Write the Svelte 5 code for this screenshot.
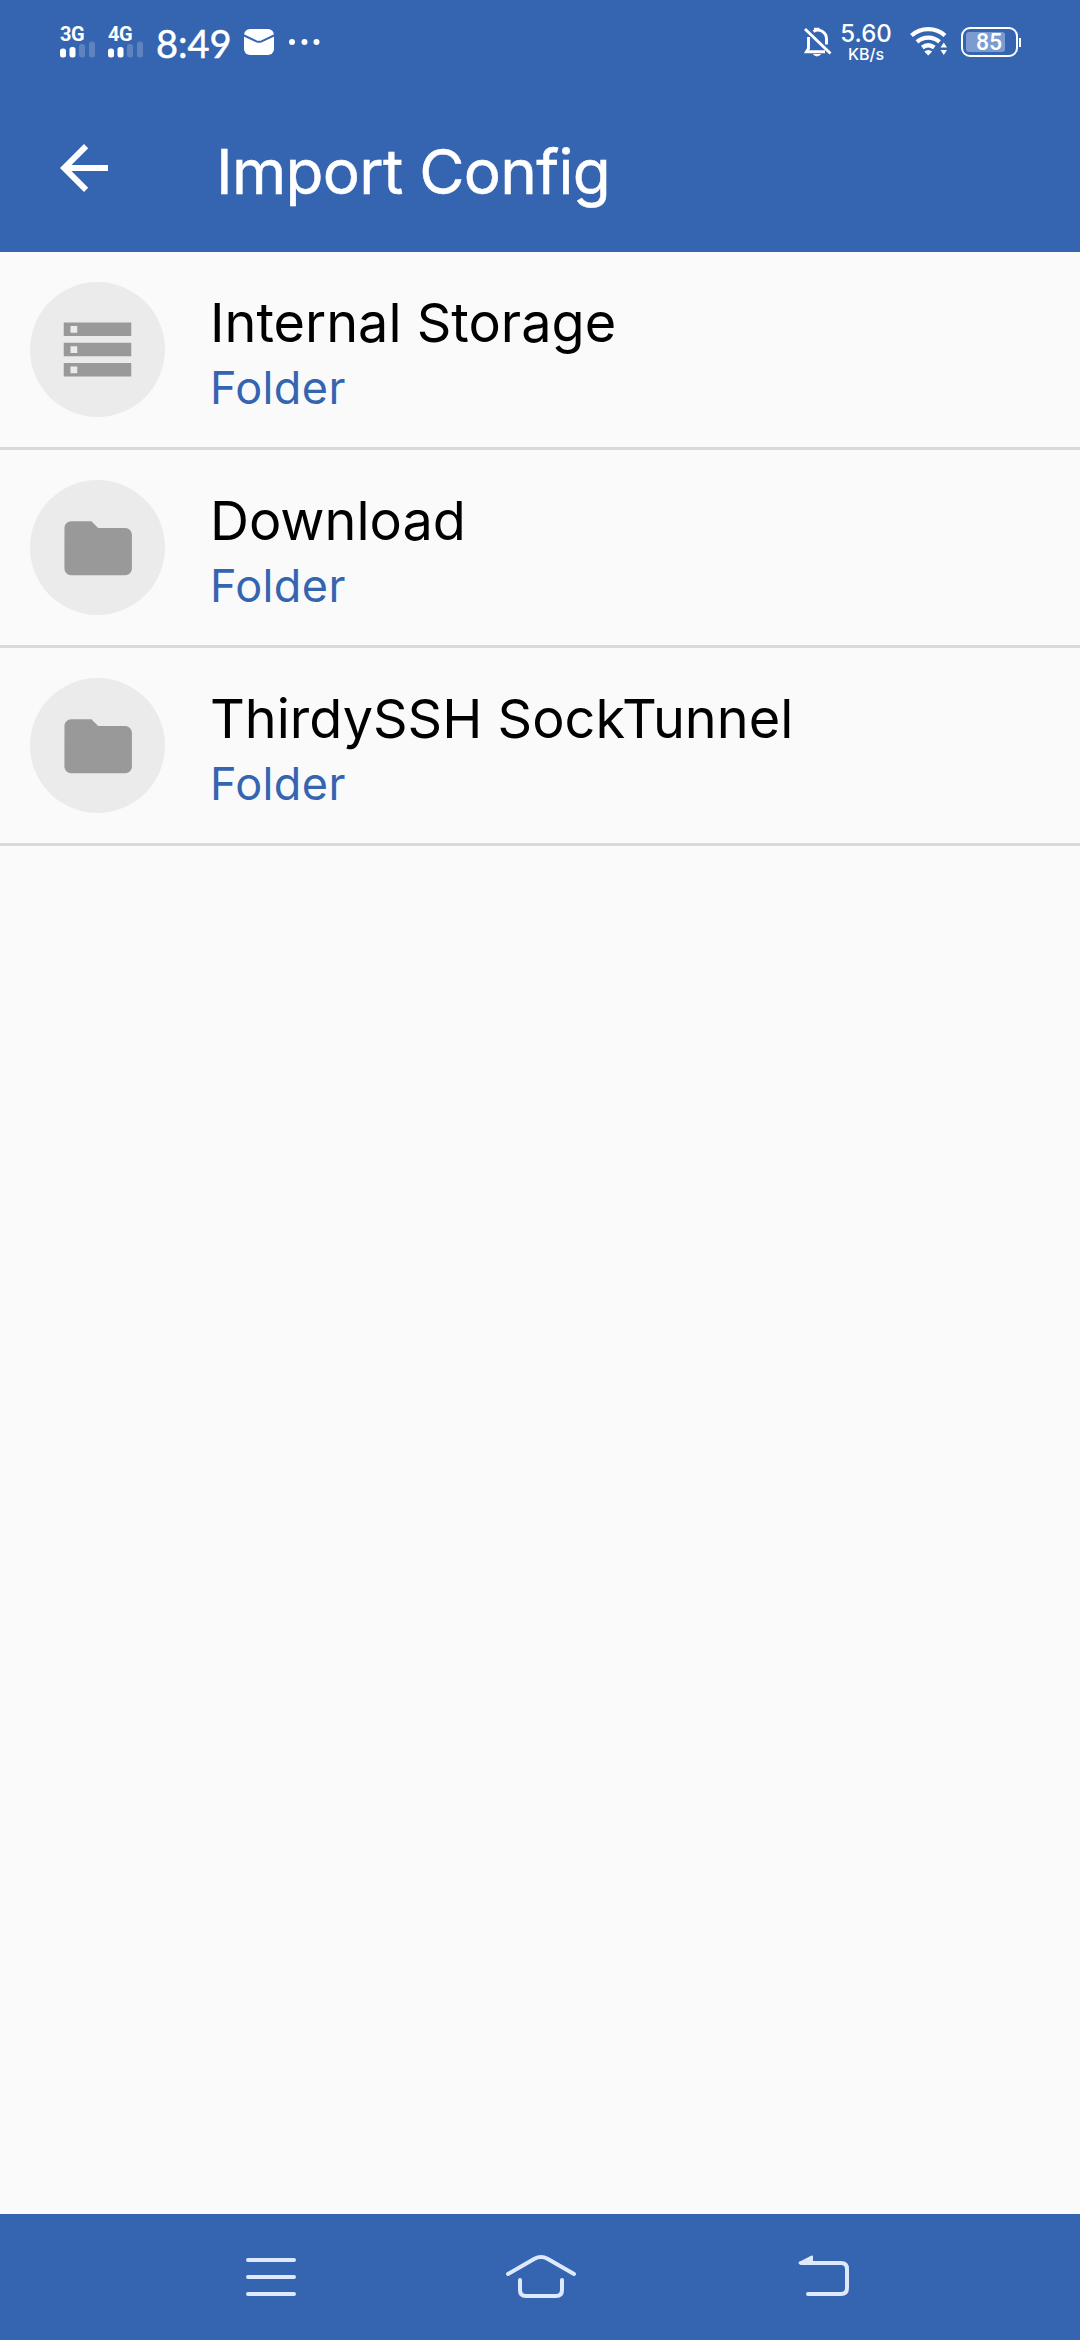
<script lang="ts">
  const networks = ['3G', '4G'];
  const entries = [
    { name: 'Internal Storage', icon: 'storage' },
    { name: 'Download', icon: 'folder' },
    { name: 'ThirdySSH SockTunnel', icon: 'folder' },
  ];
  const icons: Record<string, string> = {
    storage: 'M2 20h20v-4H2v4zm2-3h2v2H4v-2zM2 4v4h20V4H2zm4 3H4V5h2v2zm-4 7h20v-4H2v4zm2-3h2v2H4v-2z',
    folder: 'M10.200 4.200H4.200c-1.100 0-1.990.9-1.990 2L2.200 18.200c0 1.100.9 2 2 2h16c1.100 0 2-.9 2-2V8.200c0-1.100-.9-2-2-2h-8l-2-2z',
  };
</script>

<div class="screen">
  <div class="status">
    <div class="left">
      {#each networks as network}
        <div class="signal">
          <span class="gen">{network}</span>
          <svg width="36" height="17" viewBox="0 0 36 17" fill="#fff">
            <rect x="0" y="7.5" width="6" height="9" rx="2.5" />
            <rect x="9.5" y="6" width="6" height="10.5" rx="2.5" />
            <rect class="dim" x="19" y="3" width="6" height="13.5" rx="2.5" />
            <rect class="dim" x="29" y="0.5" width="6" height="16" rx="2.5" />
          </svg>
        </div>
      {/each}
      <span class="time">8:49</span>
      <svg class="mail" width="30" height="26" viewBox="0 0 30 26">
        <rect width="30" height="26" rx="6" fill="#fff" />
        <path d="M-1 6L12.500 12.300Q15 13.400 17.500 12.300L31 6" fill="none" stroke="#3565b1" stroke-width="2" />
      </svg>
      <svg class="dots" width="31" height="6" viewBox="0 0 31 6" fill="#fff">
        <circle cx="3" cy="3" r="3" /><circle cx="15.500" cy="3" r="3" /><circle cx="27.500" cy="3" r="3" />
      </svg>
    </div>

    <div class="right">
      <svg width="28" height="30" viewBox="0 0 28 30" fill="none" stroke="#fff" stroke-width="2.900">
        <path d="M1 2L26.500 26.500" />
        <path d="M4.500 10V21.500L2.500 24.700H21" />
        <path d="M9.500 4.500C15 1 22.500 5 22.500 12V17.500" />
        <path d="M10 2.200h5.500" />
        <path d="M9.500 27.500h7L13 29z" fill="#fff" stroke-width="1" />
      </svg>
      <div class="speed">
        <span class="rate">5.60</span>
        <span class="unit">KB/s</span>
      </div>
      <svg class="wifi" width="38" height="30" viewBox="0 0 38 30" fill="none" stroke="#fff" stroke-width="4.300">
        <path d="M1.500 8.500C11 0 25.500 0 35 8.500" />
        <path d="M7 14.800C13.500 9.200 23 9.200 29.500 14.800" />
        <path d="M12.300 20.500C16 17.600 20.500 17.600 24.300 20.500" />
        <path d="M14.300 24.500Q18.200 21.500 22.200 24.500L18.200 28.500z" fill="#fff" stroke="none" />
        <path d="M30.500 20.500L33.800 15.500L37 20.500zM30.500 23L33.800 28L37 23z" fill="#fff" stroke="none" />
      </svg>
      <div class="battery">
        <div class="level"><span>85</span></div>
        <i></i>
      </div>
    </div>
  </div>

  <header>
    <svg width="72" height="72" viewBox="0 0 24 24" fill="#fff">
      <path d="M20 11H7.830l5.590-5.590L12 4l-8 8 8 8 1.410-1.410L7.830 13H20v-2z" />
    </svg>
    <h1>Import Config</h1>
  </header>

  <main>
    {#each entries as entry}
      <div class="row">
        <div class="avatar">
          <svg width="81" height="81" viewBox="0 0 24 24" fill="#999"><path d={icons[entry.icon]} /></svg>
        </div>
        <div class="texts">
          <span class="name">{entry.name}</span>
          <span class="kind">Folder</span>
        </div>
      </div>
    {/each}
  </main>

  <nav>
    <svg width="50" height="44" viewBox="0 0 50 44">
      <path d="M2 5H48M2 22H48M2 39H48" />
    </svg>
    <svg class="home" width="70" height="44" viewBox="0 0 70 44">
      <path d="M2 19L28.500 3.800Q35 .300 41.500 3.800L68 19" />
      <path d="M14 25V35Q14 41 20 41H50Q56 41 56 35V25" />
    </svg>
    <svg class="back" width="51" height="44" viewBox="0 0 51 44">
      <path d="M3 8H43Q49 8 49 14V33Q49 39 43 39H10" />
      <path class="tip" d="M1.500 8L14 1.500V8z" />
    </svg>
  </nav>
</div>

<style>
  :global(body) { background: #fafafa; }
  .screen {
    width: 1080px;
    height: 2340px;
    display: flex;
    flex-direction: column;
    background: #fafafa;
    font-family: Inter, Roboto, sans-serif;
    overflow: hidden;
    white-space: nowrap;
  }
  svg { display: block; flex: none; overflow: visible; }
  .status {
    height: 84px;
    box-sizing: border-box;
    padding: 0 59px 0 60px;
    display: flex;
    justify-content: space-between;
    background: #3565b1;
    color: #fff;
  }
  .left, .right { display: flex; align-items: center; height: 84px; }
  .signal { width: 36px; margin-right: 12px; display: flex; flex-direction: column; }
  .gen { font: 700 20px/14px Roboto, sans-serif; letter-spacing: -0.5px; }
  .dim { opacity: 0.2; }
  .time { width: 75px; margin: 2px 0 0 0; font: 400 38px/40px Lato, sans-serif; -webkit-text-stroke: 0.5px #fff; }
  .mail { margin-left: 13px; }
  .dots { margin-left: 15px; }
  .speed { width: 54px; margin-left: 7px; display: flex; flex-direction: column; align-items: center; }
  .rate { font: 500 24px/24px Inter, sans-serif; }
  .unit { font: 500 16px/16px Inter, sans-serif; }
  .wifi { margin-left: 17px; }
  .battery { display: flex; align-items: center; margin-left: 13px; }
  .level {
    width: 57px;
    height: 30px;
    box-sizing: border-box;
    border: 2.500px solid #fff;
    border-radius: 9px;
    padding: 3px;
    display: flex;
  }
  .level span {
    width: 39px;
    padding-left: 10px;
    box-sizing: border-box;
    border-radius: 3px;
    background: #7c9bd0;
    font: 500 23px/22px Roboto, sans-serif;
  }
  .battery i { width: 2px; height: 9px; margin-left: 1px; background: #fff; }
  header {
    height: 168px;
    display: flex;
    align-items: center;
    padding-left: 48px;
    background: #3565b1;
    color: #fff;
  }
  h1 {
    margin: 7px 0 0 96px;
    font-size: 62px;
    line-height: 72px;
    font-weight: 400;
    letter-spacing: -0.7px;
    -webkit-text-stroke: 0.5px #fff;
  }
  main { flex: 1; }
  .row {
    height: 198px;
    box-sizing: border-box;
    border-bottom: 3px solid #d9d9d9;
    padding: 0 30px;
    display: flex;
    align-items: center;
  }
  .avatar {
    width: 135px;
    height: 135px;
    border-radius: 50%;
    background: #ebebeb;
    display: flex;
    align-items: center;
    justify-content: center;
  }
  .texts { margin-left: 45px; padding-top: 6px; display: flex; flex-direction: column; }
  .name { font-size: 54px; line-height: 70px; font-weight: 400; color: #000; }
  .kind { font-size: 45px; line-height: 60px; font-weight: 400; letter-spacing: 0.4px; color: #3565b1; }
  nav {
    height: 126px;
    box-sizing: border-box;
    padding-left: 246px;
    display: flex;
    align-items: center;
    background: #3565b1;
  }
  nav path { fill: none; stroke: #dfe9fd; stroke-width: 4; stroke-linecap: round; stroke-linejoin: round; }
  nav .tip { fill: #dfe9fd; stroke-width: 2; }
  .home { margin-left: 210px; }
  .back { margin-left: 222px; }
</style>
